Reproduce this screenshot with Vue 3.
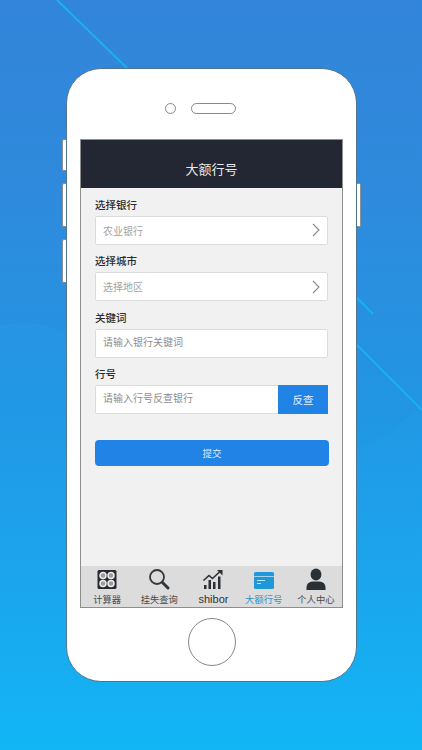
<script setup>
const fields = [
  { label: '选择银行', text: '农业银行', arrow: true },
  { label: '选择城市', text: '选择地区', arrow: true },
  { label: '关键词', text: '请输入银行关键词', top: true },
  { label: '行号', text: '请输入行号反查银行', top: true, action: '反查' }
]

const tabs = [
  { name: '计算器', icon: 'calc' },
  { name: '挂失查询', icon: 'search' },
  { name: 'shibor', icon: 'chart' },
  { name: '大额行号', icon: 'card', active: true },
  { name: '个人中心', icon: 'user' }
]
</script>

<template>
  <div class="page">
    <!-- background streaks -->
    <svg class="streaks" width="422" height="750" viewBox="0 0 422 750">
      <defs>
        <linearGradient id="swoosh-fade" x1="0" y1="0" x2="0" y2="1">
          <stop offset="0" stop-color="#25a4ee" stop-opacity="0.22" />
          <stop offset="1" stop-color="#25a4ee" stop-opacity="0" />
        </linearGradient>
      </defs>
      <path class="swoosh" d="M0 326Q34 318 66 334L358 452Q392 434 422 404V750H0Z" />
      <path d="M57 0L128 69" />
      <path d="M357 298L373 314" />
      <path d="M357 345L422 410" />
    </svg>

    <div class="phone">
      <span class="side side-a"></span>
      <span class="side side-b"></span>
      <span class="side side-c"></span>
      <span class="side side-d"></span>

      <div class="speaker-row">
        <span class="camera"></span>
        <span class="speaker"></span>
      </div>

      <div class="screen">
        <header class="app-header">大额行号</header>

        <main class="form">
          <div v-for="field in fields" :key="field.label" class="field">
            <div class="label">{{ field.label }}</div>
            <div class="box">
              <span class="box-text" :class="{ 'box-text-top': field.top }">{{ field.text }}</span>
              <svg v-if="field.arrow" class="arrow" width="8" height="14" viewBox="0 0 8 14">
                <path d="M1 1L7 7L1 13" />
              </svg>
              <span v-if="field.action" class="action">{{ field.action }}</span>
            </div>
          </div>
          <button class="submit">提交</button>
        </main>

        <nav class="tabs">
          <div v-for="tab in tabs" :key="tab.name" class="tab" :class="{ active: tab.active, 'tab-latin': tab.icon === 'chart' }">
            <svg class="tab-icon" width="24" height="24" viewBox="0 0 24 24">
              <template v-if="tab.icon === 'calc'">
                <rect x="2.5" y="2" width="19" height="19" rx="1.5" fill="#26292f" />
                <circle cx="8" cy="7.5" r="3" fill="#9c9c9c" stroke="#ececec" stroke-width="1.5" />
                <circle cx="16" cy="7.5" r="3" fill="#9c9c9c" stroke="#ececec" stroke-width="1.5" />
                <circle cx="8" cy="15.5" r="3" fill="#9c9c9c" stroke="#ececec" stroke-width="1.5" />
                <circle cx="16" cy="15.5" r="3" fill="#9c9c9c" stroke="#ececec" stroke-width="1.5" />
              </template>
              <template v-else-if="tab.icon === 'search'">
                <circle cx="10" cy="9" r="7" fill="none" stroke="#33373d" stroke-width="1.8" />
                <path d="M15.5 14.5L21 20" stroke="#33373d" stroke-width="3" stroke-linecap="round" />
              </template>
              <template v-else-if="tab.icon === 'chart'">
                <path d="M2.5 12.5L8 7.5L11.5 10.5L19 3.5" fill="none" stroke="#2b2f36" stroke-width="1.6" />
                <path d="M16 2H21.5V7.5Z" fill="#2b2f36" />
                <path d="M3 17H5.5V21H3ZM7.5 12H10V21H7.5ZM12 14H14.5V21H12ZM17 8.5H19.5V21H17Z" fill="#2b2f36" />
              </template>
              <template v-else-if="tab.icon === 'card'">
                <rect x="2" y="4" width="20" height="17" rx="1.5" fill="#1f97d8" />
                <path d="M2 8.5H22" stroke="#bfe3f5" stroke-width="0.8" />
                <path d="M5 12.5H13M5 15.5H9" stroke="#bfe3f5" stroke-width="1" />
              </template>
              <template v-else>
                <ellipse cx="12" cy="6.5" rx="5.4" ry="6" fill="#2b2f36" />
                <path d="M2.5 22V19.5Q2.5 14 9 13.5H15Q21.5 14 21.5 19.5V22Z" fill="#2b2f36" />
              </template>
            </svg>
            <span class="tab-name">{{ tab.name }}</span>
          </div>
        </nav>
      </div>

      <div class="home"></div>
    </div>
  </div>
</template>

<style>
body {
  margin: 0;
}
</style>

<style scoped>
.page {
  position: relative;
  width: 422px;
  height: 750px;
  overflow: hidden;
  padding: 68px 0 0 66px;
  box-sizing: border-box;
  background: linear-gradient(180deg, #3285da 0%, #2f8adc 25%, #2196e3 55%, #12b6f5 100%);
  font-family: "Noto Sans CJK SC", "Liberation Sans", sans-serif;
}

.streaks {
  position: absolute;
  left: 0;
  top: 0;
}

.streaks path {
  fill: none;
  stroke: #16b4f0;
  stroke-width: 1.8;
}

.streaks .swoosh {
  fill: url(#swoosh-fade);
  stroke: none;
}

.phone {
  position: relative;
  width: 291px;
  height: 614px;
  box-sizing: border-box;
  padding: 0 13px;
  display: flex;
  flex-direction: column;
  background: #fff;
  border: 1px solid #4f7590;
  border-radius: 35px;
}

.side {
  position: absolute;
  width: 4px;
  background: #fff;
  border: 1px solid #8b8f94;
  box-sizing: border-box;
}

.side-a,
.side-b,
.side-c {
  left: -5px;
  border-right: none;
  border-radius: 2px 0 0 2px;
}

.side-a {
  top: 70px;
  height: 32px;
}

.side-b {
  top: 114px;
  height: 44px;
}

.side-c {
  top: 170px;
  height: 44px;
}

.side-d {
  right: -5px;
  top: 114px;
  height: 44px;
  border-left: none;
  border-radius: 0 2px 2px 0;
}

.speaker-row {
  height: 70px;
  flex-shrink: 0;
  box-sizing: border-box;
  padding: 34px 0 0 85px;
  display: flex;
  align-items: flex-start;
  gap: 15px;
}

.camera {
  width: 11px;
  height: 11px;
  box-sizing: border-box;
  border: 1px solid #85898d;
  border-radius: 50%;
}

.speaker {
  width: 45px;
  height: 11px;
  box-sizing: border-box;
  border: 1px solid #85898d;
  border-radius: 6px;
}

.screen {
  width: 263px;
  height: 469px;
  flex-shrink: 0;
  box-sizing: border-box;
  display: flex;
  flex-direction: column;
  background: #f1f1f1;
  border: 1px solid #8e8e8e;
}

.app-header {
  height: 48px;
  flex-shrink: 0;
  box-sizing: border-box;
  padding-top: 19px;
  background: #222733;
  color: #e9e9ea;
  font-size: 13px;
  line-height: 20px;
  text-align: center;
}

.form {
  flex: 1;
  padding: 8.5px 14px 0;
  display: flex;
  flex-direction: column;
}

.field {
  margin-bottom: 8.5px;
}

.label {
  height: 20px;
  color: #2c2c2c;
  font-size: 10.5px;
  font-weight: 500;
  line-height: 15px;
}

.field .box {
  margin-top: -1px;
}

.box {
  width: 233px;
  height: 29px;
  box-sizing: border-box;
  display: flex;
  align-items: center;
  justify-content: space-between;
  padding-left: 7px;
  background: #fff;
  border: 1px solid #dcdcdc;
  border-radius: 2px;
}

.box-text {
  color: #a3a3a3;
  font-size: 10px;
}

.box-text-top {
  position: relative;
  top: -2px;
  color: #8e8e8e;
}

.arrow {
  margin-right: 7px;
}

.arrow path {
  fill: none;
  stroke: #8a8a8a;
  stroke-width: 1.1;
}

.action {
  width: 50px;
  height: 29px;
  margin-right: -1px;
  display: flex;
  align-items: center;
  justify-content: center;
  background: #2283e6;
  color: #e8f2fc;
  font-size: 10.5px;
}

.submit {
  width: 234px;
  height: 26px;
  margin-top: 17px;
  padding: 0;
  border: none;
  border-radius: 4px;
  background: #2283e6;
  color: #dcebfb;
  font-family: inherit;
  font-size: 9.5px;
}

.tabs {
  height: 41px;
  flex-shrink: 0;
  display: grid;
  grid-template-columns: repeat(5, 1fr);
  background: #dcdcdc;
}

.tab {
  display: flex;
  flex-direction: column;
  align-items: center;
  color: #4a4a4a;
}

.tab.active {
  color: #2e93c9;
}

.tab-latin {
  padding-left: 4px;
}

.tab-icon {
  margin-top: 2px;
  height: 24px;
}

.tab-name {
  font-size: 9.3px;
  line-height: 14px;
  white-space: nowrap;
}

.tab-latin .tab-name {
  font-family: "Liberation Sans", sans-serif;
  font-size: 11px;
  color: #333;
}

.home {
  width: 48px;
  height: 48px;
  margin: 10px 0 0 108px;
  box-sizing: border-box;
  border: 1px solid #85898d;
  border-radius: 50%;
}
</style>
